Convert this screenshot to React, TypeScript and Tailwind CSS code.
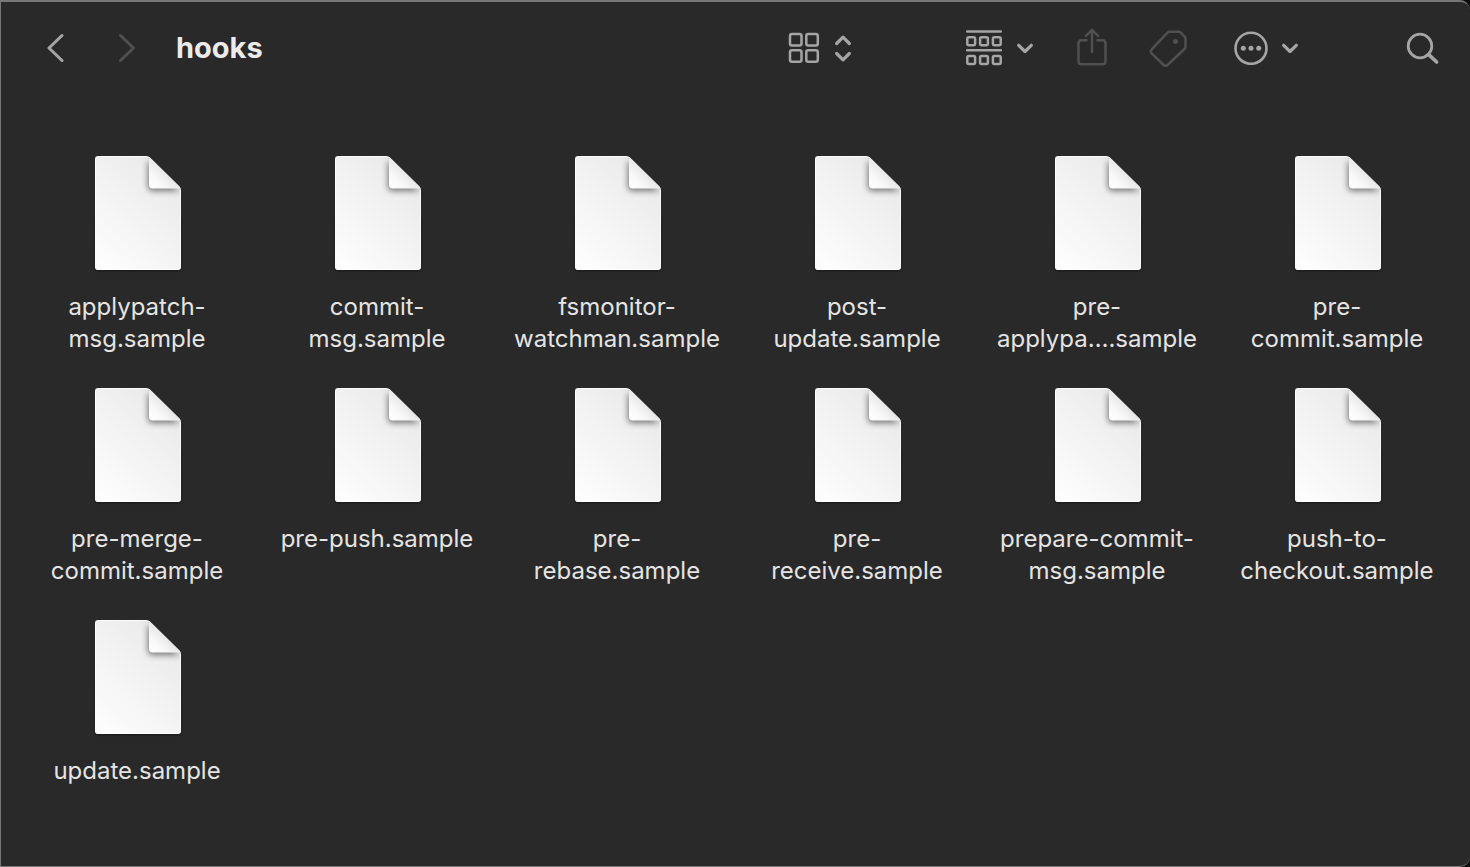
import React from "react";

const files: string[][] = [
  ["applypatch-", "msg.sample"],
  ["commit-", "msg.sample"],
  ["fsmonitor-", "watchman.sample"],
  ["post-", "update.sample"],
  ["pre-", "applypa….sample"],
  ["pre-", "commit.sample"],
  ["pre-merge-", "commit.sample"],
  ["pre-push.sample"],
  ["pre-", "rebase.sample"],
  ["pre-", "receive.sample"],
  ["prepare-commit-", "msg.sample"],
  ["push-to-", "checkout.sample"],
  ["update.sample"],
];

function DocumentDefs() {
  return (
    <svg width="0" height="0" className="absolute" aria-hidden="true">
      <defs>
        <linearGradient id="paper" gradientUnits="userSpaceOnUse" x1="10" y1="110" x2="95" y2="25">
          <stop offset="0" stopColor="#fdfdfd" />
          <stop offset="0.5" stopColor="#f3f3f3" />
          <stop offset="1" stopColor="#e9e9e9" />
        </linearGradient>
        <linearGradient id="fold" gradientUnits="userSpaceOnUse" x1="58" y1="32" x2="74" y2="16">
          <stop offset="0" stopColor="#ffffff" />
          <stop offset="0.5" stopColor="#f8f8f8" />
          <stop offset="1" stopColor="#e6e6e6" />
        </linearGradient>
        <clipPath id="sheet">
          <path d="M6 0H54.500Q56.500 0 58 1.500L87.500 30.500Q89 32 89 34V111Q89 114 86 114H6Q3 114 3 111V3Q3 0 6 0Z" />
        </clipPath>
        <filter id="foldShadow" x="-50%" y="-50%" width="200%" height="200%">
          <feGaussianBlur stdDeviation="3.200" />
        </filter>
        <filter id="sheetShadow" x="-20%" y="-20%" width="140%" height="140%">
          <feGaussianBlur stdDeviation="1.200" />
        </filter>
      </defs>
    </svg>
  );
}

function DocumentIcon() {
  return (
    <svg width="92" height="114" viewBox="0 0 92 114" className="overflow-visible" aria-hidden="true">
      <rect x="3" y="60" width="86" height="55" rx="3" fill="#000" opacity="0.5" filter="url(#sheetShadow)" />
      <g clipPath="url(#sheet)">
        <rect x="3" width="86" height="114" fill="url(#paper)" />
        <path d="M56 4V30Q56 35 61 35H88Z" fill="#000" opacity="0.5" filter="url(#foldShadow)" />
        <path d="M57 0V28.500Q57 32.500 61 32.500H90Z" fill="url(#fold)" />
        <path d="M6 .5H55M3.500 3V111Q3.500 113.500 6 113.500H86Q88.500 113.500 88.500 111V34" fill="none" stroke="#fff" opacity="0.75" />
      </g>
    </svg>
  );
}

function FileItem({ lines }: { lines: string[] }) {
  return (
    <li className="flex flex-col items-center">
      <DocumentIcon />
      <p className="mt-[21px] pr-0.5 text-center text-2xl leading-8 whitespace-nowrap text-[#e4e4e4]">
        {lines.map((line) => (
          <span key={line} className="block">
            {line}
          </span>
        ))}
      </p>
    </li>
  );
}

function Glyph({ w, h, children }: { w: number; h: number; children: React.ReactNode }) {
  return (
    <svg
      width={w}
      height={h}
      viewBox={`0 0 ${w} ${h}`}
      fill="none"
      stroke="currentColor"
      strokeWidth="2.500"
      strokeLinecap="round"
      strokeLinejoin="round"
      aria-hidden="true"
    >
      {children}
    </svg>
  );
}

function ChevronDown() {
  return (
    <Glyph w={16} h={10}>
      <path d="M1.700 2.300L8 8.500L14.300 2.300" strokeWidth="3.200" />
    </Glyph>
  );
}

function Toolbar() {
  return (
    <header className="flex h-[92px] items-center pr-[31px] pl-[45px] text-[#a5a5a5]">
      <button type="button" aria-label="Back">
        <Glyph w={18} h={30}>
          <path d="M16 2.500L3 15L16 27.500" strokeWidth="3" />
        </Glyph>
      </button>
      <button type="button" aria-label="Forward" disabled className="ml-[54px] text-[#505050]">
        <Glyph w={18} h={30}>
          <path d="M2.500 2.500L15.500 15L2.500 27.500" strokeWidth="3" />
        </Glyph>
      </button>
      <h1 className="ml-10 text-[29px] leading-10 font-bold text-[#ebebeb]">hooks</h1>

      <button type="button" aria-label="View as icons" className="ml-auto flex items-center gap-[15px]">
        <Glyph w={32} h={32}>
          <rect x="2" y="2" width="11.500" height="11.500" rx="2" />
          <rect x="18.300" y="2" width="11.500" height="11.500" rx="2" />
          <rect x="2" y="18.300" width="11.500" height="11.500" rx="2" />
          <rect x="18.300" y="18.300" width="11.500" height="11.500" rx="2" />
        </Glyph>
        <Glyph w={16} h={28}>
          <path d="M1.700 9.500L8 3.200L14.300 9.500M1.700 19.500L8 25.800L14.300 19.500" strokeWidth="3.200" />
        </Glyph>
      </button>
      <button type="button" aria-label="Group items" className="ml-[115px] flex items-center gap-[15px]">
        <Glyph w={36} h={36}>
          <path d="M1.200 1.500H34.800M1.200 20.300H34.800" strokeWidth="2.500" />
          <rect x="1.300" y="7.300" width="7.800" height="8" rx="1.500" />
          <rect x="14.100" y="7.300" width="7.800" height="8" rx="1.500" />
          <rect x="26.900" y="7.300" width="7.800" height="8" rx="1.500" />
          <rect x="1.300" y="26" width="7.800" height="8" rx="1.500" />
          <rect x="14.100" y="26" width="7.800" height="8" rx="1.500" />
          <rect x="26.900" y="26" width="7.800" height="8" rx="1.500" />
        </Glyph>
        <ChevronDown />
      </button>
      <button type="button" aria-label="Share" disabled className="ml-[43px] text-[#505050]">
        <Glyph w={32} h={40}>
          <path d="M10.500 12.300H5.500Q2.500 12.300 2.500 15.300V33.300Q2.500 36.300 5.500 36.300H26.500Q29.500 36.300 29.500 33.300V15.300Q29.500 12.300 26.500 12.300H21.500" />
          <path d="M16 24V2M10 7.800L16 1.800L22 7.800" />
        </Glyph>
      </button>
      <button type="button" aria-label="Tags" disabled className="ml-[41px] text-[#505050]">
        <Glyph w={38} h={38}>
          <path d="M20.500 2.800H29.500Q31 2.800 32 3.800L35.500 7.500Q36.500 8.500 36.500 10V17.500Q36.500 19 35.500 20L18.500 36Q16.500 37.500 14.700 36L2.500 24.300Q1 22.500 2.500 20.700L18.500 3.700Q19.300 2.800 20.500 2.800Z" />
          <circle cx="26.500" cy="12.500" r="2.500" fill="currentColor" stroke="none" />
        </Glyph>
      </button>
      <button type="button" aria-label="More actions" className="ml-[47px] flex items-center gap-[14px]">
        <Glyph w={34} h={34}>
          <circle cx="17" cy="17.300" r="15.500" strokeWidth="2.600" />
          <g fill="currentColor" stroke="none">
            <circle cx="9.300" cy="17.300" r="2.500" />
            <circle cx="17" cy="17.300" r="2.500" />
            <circle cx="24.700" cy="17.300" r="2.500" />
          </g>
        </Glyph>
        <ChevronDown />
      </button>
      <button type="button" aria-label="Search" className="ml-[108px]">
        <Glyph w={33} h={32}>
          <circle cx="14" cy="14" r="11.800" strokeWidth="2.800" />
          <path d="M22.800 22.600L30.600 30" strokeWidth="3.600" />
        </Glyph>
      </button>
    </header>
  );
}

export default function App() {
  return (
    <div className="flex min-h-screen bg-[#0c0c0c] font-['Inter','Liberation_Sans',sans-serif]">
      <DocumentDefs />
      <div className="grow rounded-r-[10px] border-t-2 border-b border-l border-[#777777] bg-[#292929]">
        <Toolbar />
        <main className="pt-[62px] pr-3 pb-10 pl-[17px]">
          <ul className="grid grid-cols-6 gap-y-[33px]">
            {files.map((lines) => (
              <FileItem key={lines.join("")} lines={lines} />
            ))}
          </ul>
        </main>
      </div>
    </div>
  );
}
